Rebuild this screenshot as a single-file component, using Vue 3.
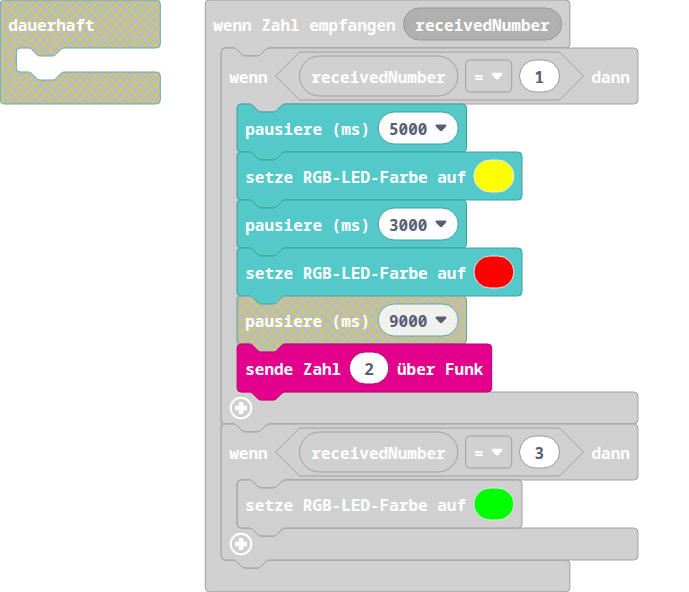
<script setup>
const NOTCH = 'c2 0 3 1 4 2l4 4c1 1 2 2 4 2h12c2 0 3 -1 4 -2l4 -4c1 -1 2 -2 4 -2'
const NOTCH_BACK = 'c-2 0 -3 1 -4 2l-4 4c-1 1 -2 2 -4 2h-12c-2 0 -3 -1 -4 -2l-4 -4c-1 -1 -2 -2 -4 -2'

// Outline of a block around its own origin; with a mouth it wraps nested statements.
function outline({ w, h, hat = false, mouth = null }) {
  let d = 'M0 4a4 4 0 0 1 4 -4'
  if (!hat) d += `H12${NOTCH}`
  d += `H${w - 4}a4 4 0 0 1 4 4`
  if (mouth) {
    const [top, bottom] = mouth
    d += `V${top - 4}a4 4 0 0 1 -4 4H64${NOTCH_BACK}H20a4 4 0 0 0 -4 4`
    d += `V${bottom - 4}a4 4 0 0 0 4 4H28${NOTCH}H${w - 4}a4 4 0 0 1 4 4`
  }
  d += `V${h - 4}a4 4 0 0 1 -4 4`
  if (!hat) d += `H48${NOTCH_BACK}`
  return d + 'H4a4 4 0 0 1 -4 -4Z'
}

const shells = [
  { kind: 'off', x: 0.3, y: 0, d: outline({ w: 160, h: 104, hat: true, mouth: [48, 72] }) },
  { kind: 'ghost', x: 205.3, y: 0, d: outline({ w: 364.6, h: 591.8, hat: true, mouth: [48, 560] }) },
  { kind: 'ghost', x: 221.2, y: 48, d: outline({ w: 416.7, h: 376, mouth: [56, 344] }) },
  { kind: 'ghost', x: 221.2, y: 424, d: outline({ w: 416.7, h: 136, mouth: [56, 104] }) },
]

const conditions = [
  { y: 76, value: '1' },
  { y: 452, value: '3' },
]

// Lower steps are drawn after upper ones, so each tab stays covered by its own outline.
const steps = [
  { y: 104, w: 229.3, kind: 'basic', text: 'pausiere (ms)', ms: '5000' },
  { y: 152, w: 284.8, kind: 'basic', text: 'setze RGB-LED-Farbe auf', color: '#ffff00' },
  { y: 200, w: 229.3, kind: 'basic', text: 'pausiere (ms)', ms: '3000' },
  { y: 248, w: 284.8, kind: 'basic', text: 'setze RGB-LED-Farbe auf', color: '#ff0000' },
  { y: 296, w: 229.3, kind: 'off', text: 'pausiere (ms)', ms: '9000' },
  { y: 344, w: 254.5, kind: 'radio', text: 'sende Zahl', number: '2', after: 'über Funk' },
  { y: 480, w: 284.8, kind: 'ghost', text: 'setze RGB-LED-Farbe auf', color: '#00ff00' },
]

const CARET = 'M-4.2 -3.6H4.2C5.5 -3.6 5.8 -2.2 4.9 -1.3L1.3 2.6Q0 3.8 -1.3 2.6L-4.9 -1.3C-5.8 -2.2 -5.5 -3.6 -4.2 -3.6Z'
</script>

<template>
  <svg class="workspace" width="689" height="592" viewBox="0 0 689 592">
    <defs>
      <pattern id="hatch" width="10" height="10" patternUnits="userSpaceOnUse">
        <rect width="10" height="10" fill="#aaa" />
        <path d="M0 0L10 10M10 0L0 10" stroke="#cc0" />
      </pattern>
    </defs>

    <path
      v-for="(s, i) in shells"
      :key="i"
      :class="['block', s.kind]"
      :transform="`translate(${s.x} ${s.y})`"
      :d="s.d"
    />

    <text x="8.2" y="31">dauerhaft</text>
    <text x="213.2" y="31">wenn Zahl empfangen</text>
    <rect class="variable" x="403.4" y="8" width="158.4" height="32" rx="16" />
    <text x="415.3" y="31">receivedNumber</text>

    <g v-for="c in conditions" :key="c.y" :transform="`translate(0 ${c.y})`">
      <text x="229.2" y="7">wenn</text>
      <path class="block ghost" d="M299.6 -24H559.6L583.6 0L559.6 24H299.6L275.6 0Z" />
      <rect class="block ghost" x="299.5" y="-20" width="158.4" height="40" rx="20" />
      <text x="311.3" y="7">receivedNumber</text>
      <rect class="block ghost" x="465.7" y="-16" width="46" height="32" rx="4" />
      <text x="474" y="7">=</text>
      <path class="caret light" transform="translate(497 0.3)" :d="CARET" />
      <rect class="field gray" x="519.5" y="-16" width="40" height="32" rx="16" />
      <text class="value" x="539.3" y="7" text-anchor="middle">{{ c.value }}</text>
      <text x="591.5" y="7">dann</text>
    </g>

    <g v-for="s in steps" :key="s.y" :transform="`translate(237.2 ${s.y})`">
      <path :class="['block', s.kind]" :d="outline({ w: s.w, h: 48 })" />
      <text x="8" y="31">{{ s.text }}</text>
      <template v-if="s.ms">
        <rect :class="['field', 'teal', { faded: s.kind === 'off' }]" x="141" y="8" width="80" height="32" rx="16" />
        <text class="value" x="151.8" y="31">{{ s.ms }}</text>
        <path class="caret" transform="translate(203.8 24)" :d="CARET" />
      </template>
      <rect v-if="s.color" class="swatch" x="236.7" y="8" width="40" height="32" rx="16" :fill="s.color" />
      <template v-if="s.number">
        <rect class="field pink" x="112.1" y="8" width="39.5" height="32" rx="16" />
        <text class="value" x="131.8" y="31" text-anchor="middle">{{ s.number }}</text>
        <text x="159.8" y="31">{{ s.after }}</text>
      </template>
    </g>

    <g v-for="y in [408, 544]" :key="y" class="plus" :transform="`translate(241 ${y})`">
      <circle r="10.3" />
      <path d="M-6 0H6M0 -6V6" />
    </g>
  </svg>
</template>

<style scoped>
.workspace {
  display: block;
  background: #fff;
}
text {
  font: 700 16px "Noto Sans Mono", "DejaVu Sans Mono", monospace;
  fill: #fff;
  white-space: pre;
}
text.value {
  fill: #575e75;
}
.block {
  stroke-width: 1;
}
.ghost {
  fill: #d0d0d0;
  stroke: #a0a0a0;
}
.basic {
  fill: #54c9c9;
  stroke: #419f9f;
}
.radio {
  fill: #e3008c;
  stroke: #b60070;
}
.off {
  fill: url(#hatch);
  fill-opacity: 0.8;
  stroke: #67a7a7;
}
.variable {
  fill: #b0b0b0;
  stroke: #999;
}
.field {
  fill: #fff;
}
.gray {
  stroke: #999;
}
.teal {
  stroke: #419f9f;
}
.pink {
  stroke: #b60070;
}
.faded {
  fill: #f1f1ee;
  stroke: #67a7a7;
}
.swatch {
  stroke: #e8e8e8;
}
.caret {
  fill: #575e75;
}
.caret.light {
  fill: #fff;
}
.plus {
  fill: none;
  stroke: #fff;
}
.plus circle {
  stroke-width: 2;
}
.plus path {
  stroke-width: 4.4;
}
</style>
